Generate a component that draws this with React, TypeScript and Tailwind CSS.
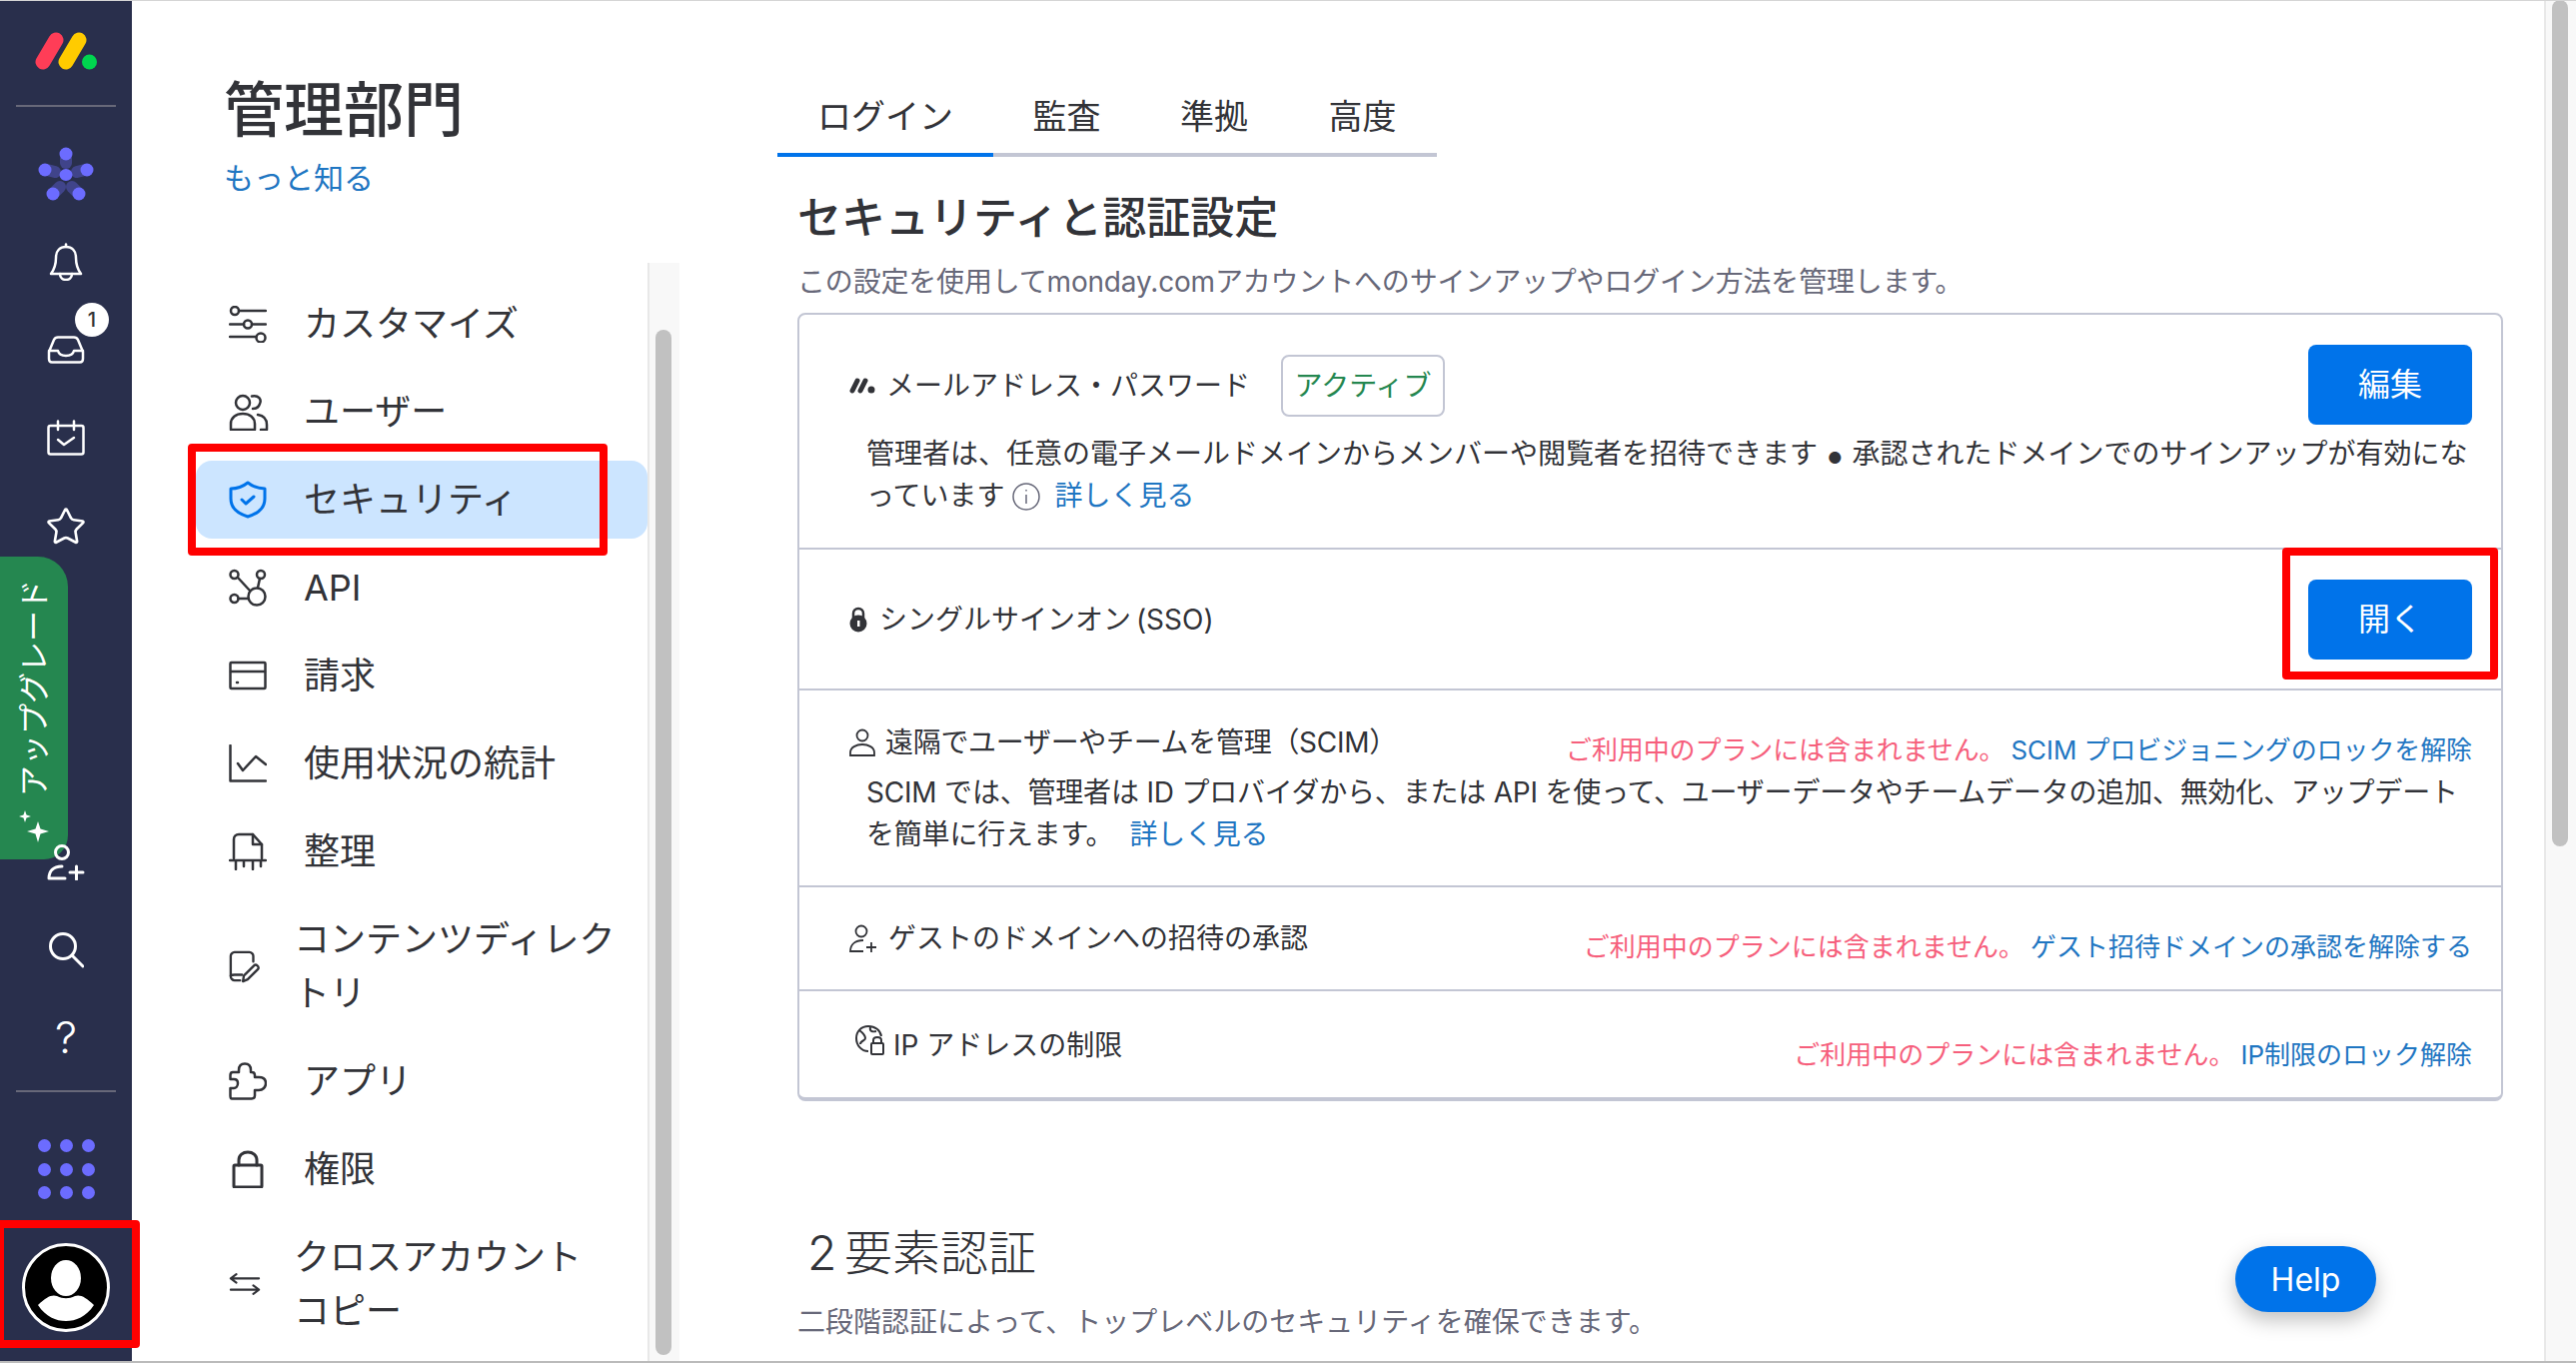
import React from 'react';
import { Star } from 'lucide-react';

const stroke = { fill: 'none', stroke: 'currentColor', strokeLinecap: 'round', strokeLinejoin: 'round' } as const;

const Svg: React.FC<{ w: number; h: number; sw?: number; className?: string; children: React.ReactNode }> = ({ w, h, sw = 2.5, className, children }) => (
  <svg width={w} height={h} viewBox={`0 0 ${w} ${h}`} strokeWidth={sw} {...stroke} className={`shrink-0 ${className ?? ''}`}>
    {children}
  </svg>
);

const navItems: { lines: string[]; icon: React.ReactNode; active?: boolean }[] = [
  {
    lines: ['カスタマイズ'],
    icon: (
      <Svg w={38} h={37}>
        <circle cx="6" cy="5" r="4" />
        <path d="M10 5H37M1 18.500H15M23 18.500H37M1 31H27" />
        <circle cx="19" cy="18.500" r="4" />
        <circle cx="32" cy="32" r="4.500" />
      </Svg>
    ),
  },
  {
    lines: ['ユーザー'],
    icon: (
      <Svg w={40} h={37}>
        <circle cx="14" cy="9" r="7" />
        <path d="M2 36V30C2 24 7 20 14 20C21 20 26 24 26 30V36Z" />
        <path d="M23 2.500C30 1 33 6 31 10C30 13 27 15 24 15" />
        <path d="M29 21C35 22 38 26 38 31V36H32" />
      </Svg>
    ),
  },
  {
    lines: ['セキュリティ'],
    active: true,
    icon: (
      <Svg w={38} h={38} sw={3} className="text-[#0073ea]">
        <path d="M19 2C24 6 30 8 36 8V18C36 27 29 33 19 36C9 33 2 27 2 18V8C8 8 14 6 19 2Z" />
        <path d="M13 19L17 23L25 16" />
      </Svg>
    ),
  },
  {
    lines: ['API'],
    icon: (
      <Svg w={38} h={38}>
        <circle cx="5.500" cy="6" r="4" />
        <circle cx="32" cy="6" r="4" />
        <circle cx="5.500" cy="30" r="4" />
        <circle cx="28" cy="28" r="8.500" />
        <path d="M9 9L21 22M31 10L29 19M9.500 30H19" />
      </Svg>
    ),
  },
  {
    lines: ['請求'],
    icon: (
      <Svg w={38} h={30}>
        <rect x="1.500" y="2" width="35" height="26" rx="1" />
        <path d="M2 11H36M8 22H9" />
      </Svg>
    ),
  },
  {
    lines: ['使用状況の統計'],
    icon: (
      <Svg w={38} h={38}>
        <path d="M1.500 1V36.500H37" />
        <path d="M9 19L14 26L27 12L37 20" />
      </Svg>
    ),
  },
  {
    lines: ['整理'],
    icon: (
      <Svg w={38} h={38}>
        <path d="M5 26V7C5 4 7 2 10 2H24L33 12V26" />
        <path d="M24 2V12H33" />
        <path d="M1 28H37M7 29V37M15 29V34M24 29V37M32 29V34" />
      </Svg>
    ),
  },
  {
    lines: ['コンテンツディレク', 'トリ'],
    icon: (
      <Svg w={34} h={34} className="w-[32px]">
        <path d="M26 12V6C26 4 24 2 22 2H6C4 2 2 4 2 6V28C2 30 4 32 6 32H12" />
        <path d="M2 27C3 26 5 26 6 26H14" />
        <path d="M15 33L16 27L27 16C29 14 33 18 31 20L20 31Z" />
      </Svg>
    ),
  },
  {
    lines: ['アプリ'],
    icon: (
      <Svg w={38} h={38}>
        <path d="M3 36.500H23C25 36.500 26 35.500 26 33.500V28H30C34 28 37 25 37 21C37 17 34 15 30 15H26V13C26 11 25 10 23 10H22V8C22 4 20 1.500 16 1.500C12 1.500 10 4 10 8V10H4C2.500 10 1.500 11 1.500 13V17H5C8 17 9 19 9 21C9 24 7 26 5 26H1.500V33.500C1.500 35.500 2 36.500 3 36.500Z" />
      </Svg>
    ),
  },
  {
    lines: ['権限'],
    icon: (
      <Svg w={38} h={38} sw={3}>
        <rect x="5" y="15" width="28" height="22" rx="1" />
        <path d="M10 15V10C10 5 14 2 19 2C24 2 28 5 28 10V15" />
      </Svg>
    ),
  },
  {
    lines: ['クロスアカウント', 'コピー'],
    icon: (
      <Svg w={34} h={24} sw={2.200} className="w-[32px]">
        <path d="M2 6H32M2 6L8 1.500M2 6L8 10.500" />
        <path d="M2 18H32M32 18L26 13.500M32 18L26 22.500" />
      </Svg>
    ),
  },
];

const Logo = () => (
  <svg width="62" height="38" viewBox="0 0 62 38" className="shrink-0">
    <path d="M8 30L21 8" stroke="#ff3d57" strokeWidth="15" strokeLinecap="round" />
    <path d="M31 30L44 8" stroke="#ffcb00" strokeWidth="15" strokeLinecap="round" />
    <ellipse cx="54.500" cy="30" rx="7.500" ry="7.500" fill="#00d64f" />
  </svg>
);

const Flower = () => (
  <svg width="56" height="54" viewBox="0 0 56 54" className="shrink-0">
    <g stroke="#6c6cff" strokeWidth="12" strokeLinecap="round" opacity="0.35">
      <path d="M28 9V16" />
      <path d="M9 23L17 25" />
      <path d="M47 23L39 25" />
      <path d="M16 46L22 40" />
      <path d="M40 46L34 40" />
    </g>
    <g fill="#6c6cff">
      <ellipse cx="28" cy="7" rx="6.500" ry="6.500" />
      <ellipse cx="7" cy="23" rx="6.500" ry="6.500" />
      <ellipse cx="49" cy="23" rx="6.500" ry="6.500" />
      <ellipse cx="15" cy="47" rx="6.500" ry="6.500" />
      <ellipse cx="41" cy="47" rx="6.500" ry="6.500" />
      <ellipse cx="28" cy="28" rx="6.500" ry="6" />
    </g>
  </svg>
);

const Rail = () => (
  <aside className="flex h-full w-[132px] shrink-0 flex-col items-center bg-[#292f4c] text-white">
    <div className="mt-[32px] flex h-[38px]"><Logo /></div>
    <div className="mt-[35px] h-[2px] w-[100px] bg-[#676879]" />
    <div className="mt-[40px] flex h-[54px]"><Flower /></div>
    <div className="mt-[42px] flex h-[38px]">
      <Svg w={34} h={38}>
        <path d="M17 1.500V4" />
        <path d="M2 31C5 27 7 23 7 15C7 8 11 4 17 4C23 4 27 8 27 15C27 23 29 27 32 31Z" />
        <path d="M11 31C11 35 14 37 17 37C20 37 23 35 23 31" />
      </Svg>
    </div>
    <div className="relative mt-[55px] flex h-[28px]">
      <Svg w={38} h={28}>
        <path d="M2 16L7 4C8 2 9 1.500 11 1.500H27C29 1.500 30 2 31 4L36 16V23C36 25 35 26.500 33 26.500H5C3 26.500 2 25 2 23Z" />
        <path d="M2 15H11C12 19 15 20 19 20C23 20 26 19 27 15H36" />
      </Svg>
      <span className="absolute left-[28px] top-[-33px] flex h-[34px] w-[34px] items-center justify-center rounded-full bg-white text-[20px] font-medium text-[#323338]">1</span>
    </div>
    <div className="mt-[56px] flex h-[36px]">
      <Svg w={38} h={36}>
        <rect x="1.500" y="6" width="35" height="28.500" rx="2" />
        <path d="M11 1.500V10M27 1.500V10M11 20L17 25L27 18" />
      </Svg>
    </div>
    <div className="mt-[53px] flex h-[35px] items-center justify-center">
      <Star size={42} strokeWidth={1.500} />
    </div>
    <div className="mt-[13px] flex h-[303px] w-[68px] flex-col items-center justify-end self-start rounded-tr-[30px] rounded-br-[24px] bg-[#258750] pb-[17px]">
      <span className="mb-[14px] rotate-180 whitespace-nowrap text-[31px] leading-[34px] [text-orientation:sideways] [writing-mode:vertical-rl]">アップグレード</span>
      <svg width="30" height="32" viewBox="0 0 30 32" fill="currentColor" className="shrink-0">
        <path d="M19 11L21.500 18.500L30 21L21.500 23.500L19 32L16.500 23.500L8 21L16.500 18.500Z" />
        <path d="M6 0L7.500 4.500L12 6L7.500 7.500L6 12L4.500 7.500L0 6L4.500 4.500Z" />
      </svg>
    </div>
    <div className="relative -mt-[15px] flex h-[36px]">
      <Svg w={38} h={36} sw={3}>
        <circle cx="15" cy="8" r="6.500" />
        <path d="M18 34H2C2 27 6 22 15 22" />
        <path d="M23 28H36M29.500 22V35" />
      </Svg>
    </div>
    <div className="mt-[52px] flex h-[35px]">
      <Svg w={36} h={36} sw={3}>
        <circle cx="15" cy="14" r="12.500" />
        <path d="M24 23L35 34" />
      </Svg>
    </div>
    <div className="mt-[52px] flex h-[36px] items-center text-[44px] font-light leading-[36px]">?</div>
    <div className="mt-[35px] h-[2px] w-[100px] bg-[#676879]" />
    <div className="mt-[47px] grid h-[62px] grid-cols-3 gap-x-[9px] gap-y-[9px]">
      {Array.from({ length: 9 }).map((_, i) => (
        <span key={i} className="h-[13px] w-[13px] rounded-full bg-[#6c6cff]" />
      ))}
    </div>
    <div className="mt-[42px] flex h-[89px]">
      <svg width="88" height="89" viewBox="0 0 88 89" className="shrink-0">
        <ellipse cx="44" cy="44.500" rx="42.500" ry="43" fill="#000" stroke="#fff" strokeWidth="3" />
        <ellipse cx="44" cy="35" rx="15" ry="18" fill="#fff" />
        <path d="M16 62C24 54 30 51 35 53C41 56 47 56 53 53C58 51 64 54 72 62C64 74 54 78 44 78C34 78 24 74 16 62Z" fill="#fff" />
      </svg>
    </div>
  </aside>
);

const Scrollbar: React.FC<{ thumb: string }> = ({ thumb }) => (
  <div className="h-full w-[32px] shrink-0 border-l-2 border-[#e8e8e8] bg-[#f8f8f8] pl-[6px]">
    <div className={`w-[16px] rounded-full bg-[#c1c1c1] ${thumb}`} />
  </div>
);

const AdminNav = () => (
  <div className="flex h-full w-[548px] shrink-0 flex-col">
    <div className="pl-[92px] pt-[74px]">
      <h1 className="whitespace-nowrap text-[60px] font-medium leading-[72px] text-[#323338]">管理部門</h1>
      <a className="mt-[12px] block text-[30px] leading-[40px] text-[#1f76c2]">もっと知る</a>
    </div>
    <div className="mt-[65px] flex min-h-0 flex-1 overflow-hidden pl-[64px]">
      <nav className="flex flex-1 flex-col gap-[10px] pt-[22px]">
        {navItems.map((item) => {
          const wrapped = item.lines.length > 1;
          return (
            <div
              key={item.lines[0]}
              className={`flex items-center py-[12px] pl-[33px] text-[36px] leading-[54px] text-[#323338] ${wrapped ? 'gap-[33px]' : 'gap-[37px]'} ${item.active ? 'rounded-[16px] bg-[#cce5ff]' : ''}`}
            >
              <span className={`flex shrink-0 items-center ${wrapped ? 'w-[32px]' : 'w-[38px]'}`}>{item.icon}</span>
              <span className="whitespace-nowrap">
                {item.lines.map((line) => (
                  <span key={line} className="block">{line}</span>
                ))}
              </span>
            </div>
          );
        })}
      </nav>
      <Scrollbar thumb="mt-[67px] h-[1026px]" />
    </div>
  </div>
);

const Plan: React.FC<{ link: string }> = ({ link }) => (
  <p className="flex gap-[6px] whitespace-nowrap text-[26px] leading-[36px]">
    <span className="text-[#f65f7c]">ご利用中のプランには含まれません。</span>
    <a className="text-[#1f76c2]">{link}</a>
  </p>
);

const ActionButton: React.FC<{ label: string }> = ({ label }) => (
  <button className="h-[80px] w-[164px] shrink-0 rounded-[8px] bg-[#0073ea] text-[32px] text-white">{label}</button>
);

const Security = () => (
  <main className="flex min-w-0 flex-1 flex-col pl-[118px]">
    <div className="ml-[-20px] mt-[77px] flex h-[80px] w-[660px] border-b-4 border-[#c3c6d4] text-[34px] leading-[80px] text-[#323338]">
      <span className="-mb-1 h-[80px] w-[216px] border-b-4 border-[#0073ea] text-center">ログイン</span>
      <span className="w-[147px] text-center">監査</span>
      <span className="w-[148px] text-center">準拠</span>
      <span className="w-[149px] text-center">高度</span>
    </div>
    <h2 className="mt-[31px] text-[44px] font-medium leading-[60px] text-[#323338]">セキュリティと認証設定</h2>
    <p className="mt-[14px] text-[28px] leading-[40px] tracking-[-0.18px] text-[#676879]">この設定を使用してmonday.comアカウントへのサインアップやログイン方法を管理します。</p>

    <section className="mt-[11px] w-[1707px] rounded-[8px] border-2 border-b-4 border-[#c3c6d4] text-[28px] leading-[42px] text-[#323338]">
      <div className="h-[233px] pl-[50px] pr-[29px] pt-[30px]">
        <div className="flex h-[80px] items-center justify-between">
          <div className="mt-[2px] flex items-center">
            <svg width="26" height="16" viewBox="0 0 26 16" className="shrink-0">
              <path d="M3 13L8 3M11 13L16 3" stroke="#323338" strokeWidth="5" strokeLinecap="round" />
              <circle cx="22" cy="12" r="3.500" fill="#323338" />
            </svg>
            <span className="ml-[11px]">メールアドレス・パスワード</span>
            <span className="ml-[31px] flex h-[62px] w-[164px] items-center justify-center rounded-[8px] border-2 border-[#c3c6d4] text-[#258750]">アクティブ</span>
          </div>
          <ActionButton label="編集" />
        </div>
        <p className="ml-[17px] mt-[8px] whitespace-nowrap">
          管理者は、任意の電子メールドメインからメンバーや閲覧者を招待できます <span className="mx-[2px] text-[16px] leading-none">●</span> 承認されたドメインでのサインアップが有効にな
          <br />
          っています
          <svg width="28" height="28" viewBox="0 0 28 28" fill="none" stroke="#676879" strokeWidth="1.500" className="ml-[7px] mr-[15px] inline-block align-[-5px]">
            <circle cx="14" cy="14" r="13" />
            <path d="M14 12V21M14 7V8.500" />
          </svg>
          <a className="text-[#1f76c2]">詳しく見る</a>
        </p>
      </div>

      <div className="flex h-[141px] items-center justify-between border-t-2 border-[#c3c6d4] pl-[50px] pr-[29px]">
        <div className="flex items-center gap-[12px]">
          <svg width="18" height="26" viewBox="0 0 18 26" className="shrink-0">
            <path d="M4 12V7C4 4 6 2 9 2C12 2 14 4 14 7V12" fill="none" stroke="#323338" strokeWidth="2.500" />
            <circle cx="9" cy="17" r="8.500" fill="#323338" />
            <rect x="8" y="14" width="2.500" height="6" fill="#fff" />
          </svg>
          <span className="[word-spacing:-3px]">シングルサインオン (SSO)</span>
        </div>
        <ActionButton label="開く" />
      </div>

      <div className="h-[197px] border-t-2 border-[#c3c6d4] pl-[50px] pr-[29px] pt-[31px]">
        <div className="flex h-[42px] items-center justify-between">
          <div className="flex items-center gap-[10px]">
            <svg width="26" height="28" viewBox="0 0 26 28" fill="none" stroke="#323338" strokeWidth="1.800" className="shrink-0">
              <circle cx="13" cy="7" r="5.500" />
              <path d="M1 27V24C1 19 7 16 13 16C19 16 25 19 25 24V27Z" />
            </svg>
            <span className="tracking-[-0.3px]">遠隔でユーザーやチームを管理（SCIM）</span>
          </div>
          <div className="mt-[16px] tracking-[-0.1px]"><Plan link="SCIM プロビジョニングのロックを解除" /></div>
        </div>
        <p className="ml-[17px] mt-[8px] whitespace-nowrap tracking-[-0.2px]">
          SCIM では、管理者は ID プロバイダから、または API を使って、ユーザーデータやチームデータの追加、無効化、アップデート
          <br />
          を簡単に行えます。<a className="ml-[16px] text-[#1f76c2]">詳しく見る</a>
        </p>
      </div>

      <div className="flex h-[104px] items-center justify-between border-t-2 border-[#c3c6d4] pl-[50px] pr-[29px]">
        <div className="flex items-center gap-[11px]">
          <svg width="28" height="28" viewBox="0 0 28 28" fill="none" stroke="#323338" strokeWidth="1.800" className="shrink-0">
            <circle cx="12" cy="7" r="5.500" />
            <path d="M14 27H1C1 20 6 16 14 16" />
            <path d="M17 23H27M22 18V28" />
          </svg>
          <span>ゲストのドメインへの招待の承認</span>
        </div>
        <div className="mt-[18px]"><Plan link="ゲスト招待ドメインの承認を解除する" /></div>
      </div>

      <div className="flex h-[108px] items-center justify-between border-t-2 border-[#c3c6d4] pl-[55px] pr-[29px]">
        <div className="mt-[2px] flex items-center gap-[9px]">
          <svg width="30" height="32" viewBox="0 0 30 32" fill="none" stroke="#323338" strokeWidth="2" className="mt-[-10px] shrink-0">
            <path d="M14 27C7 27 2 21 2 14C2 7 7 2 14 2C21 2 26 6 27 12" />
            <path d="M5 6C9 9 11 11 11 14C11 17 6 16 6 20M16 3C15 7 18 8 22 7" />
            <rect x="17" y="19" width="12" height="11" rx="1" />
            <path d="M19 19V16C19 14 21 13 23 13C25 13 27 14 27 16V19" />
          </svg>
          <span>IP アドレスの制限</span>
        </div>
        <div className="mt-[22px]"><Plan link="IP制限のロック解除" /></div>
      </div>
    </section>

    <h2 className="ml-[10px] mt-[122px] text-[48px] font-light leading-[60px] text-[#323338] [word-spacing:-6px]">2 要素認証</h2>
    <p className="mt-[19px] text-[28px] leading-[40px] text-[#676879]">二段階認証によって、トップレベルのセキュリティを確保できます。</p>
  </main>
);

const App: React.FC = () => (
  <div className="relative flex h-[1364px] w-[2578px] overflow-hidden border-b-2 border-[#bbbbbb] bg-white font-['Inter','Noto_Sans_CJK_JP',sans-serif]">
    <Rail />
    <AdminNav />
    <Security />
    <Scrollbar thumb="h-[847px]" />

    {/* thin frame line along the top of the screenshot */}
    <div className="absolute inset-x-0 top-0 h-px bg-[#d5d5d5]" />

    {/* red annotation boxes from the original screenshot */}
    <div className="absolute left-[-4px] top-[1221px] h-[128px] w-[144px] rounded-[4px] border-8 border-[#ff0000]" />
    <div className="absolute left-[188px] top-[444px] h-[112px] w-[420px] rounded-[4px] border-8 border-[#ff0000]" />
    <div className="absolute left-[2284px] top-[548px] h-[132px] w-[216px] rounded-[4px] border-8 border-[#ff0000]" />

    <button className="absolute left-[2237px] top-[1247px] h-[66px] w-[141px] rounded-full bg-[#0073ea] pt-[2px] text-[32px] text-white shadow-[0_8px_20px_rgba(0,0,0,0.25)]">Help</button>
  </div>
);

export default App;
